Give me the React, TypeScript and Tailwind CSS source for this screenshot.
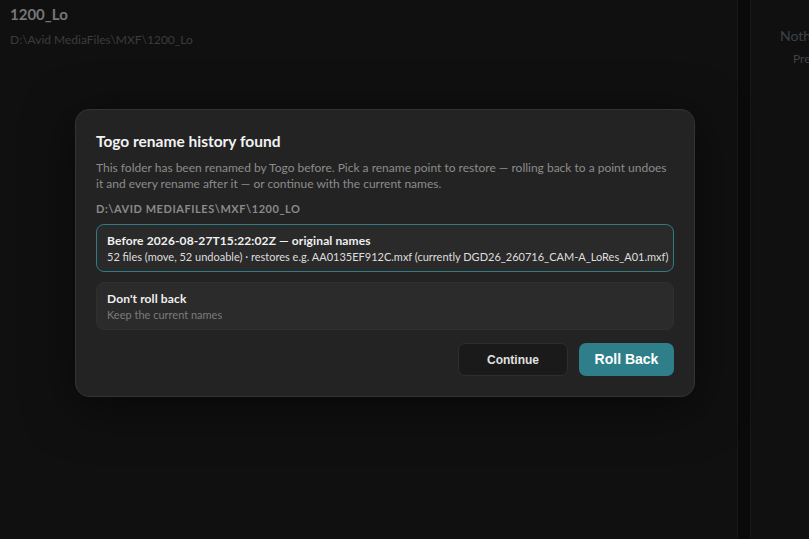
import React from 'react';

const ui = { fontFamily: 'Lato, "Noto Sans", sans-serif' };
const btn = { fontFamily: '"Liberation Sans", Arial, sans-serif' };

interface RollbackOption {
    title: string;
    detail: string;
    selected?: boolean;
}

const options: ReadonlyArray<RollbackOption> = [
    {
        title: 'Before 2026-08-27T15:22:02Z — original names',
        detail: '52 files (move, 52 undoable) · restores e.g. AA0135EF912C.mxf (currently DGD26_260716_CAM-A_LoRes_A01.mxf)',
        selected: true,
    },
    { title: "Don't roll back", detail: 'Keep the current names' },
];

const App: React.FC = () => {
    return (
        <div className="relative flex h-[539px] w-[809px] overflow-hidden bg-[#101010]" style={ui}>
            {/* background app, already dimmed */}
            <div className="flex w-[737px] flex-col px-[10px] pt-[4px]">
                <h1 className="text-[15px] font-bold leading-[20px] text-[#767676]">1200_Lo</h1>
                <p className="mt-[8px] text-[12px] leading-[16px] text-[#3c3c3c]">D:\Avid MediaFiles\MXF\1200_Lo</p>
            </div>
            <div className="w-[14px] border-x border-[#161616] bg-[#0a0a0a]" />
            <div className="flex flex-1 flex-col overflow-hidden pt-[27px] whitespace-nowrap text-[#3d4249]">
                <span className="ml-[29px] text-[14px] leading-[18px]">Nothing</span>
                <span className="ml-[42px] mt-[6px] text-[12px] leading-[16px]">Pre</span>
            </div>

            <div className="absolute inset-0 pl-[75px] pt-[109px]">
                <div className="w-[620px] rounded-[14px] border border-[#333333] bg-[#232323] px-[20px] pb-[20px] pt-[20px] shadow-[0_10px_50px_rgba(0,0,0,0.55)]">
                    <h2 className="text-[15.5px] font-bold leading-[22px] text-[#f2f2f2]">Togo rename history found</h2>
                    <p className="mt-[8px] text-[12px] leading-[16px] text-[#8c8c8c]">
                        This folder has been renamed by Togo before. Pick a rename point to restore — rolling back to a point undoes
                        it and every rename after it — or continue with the current names.
                    </p>
                    <p className="mt-[10px] text-[11px] font-bold uppercase leading-[14px] tracking-[0.05em] text-[#8a8a8a]">
                        D:\Avid MediaFiles\MXF\1200_Lo
                    </p>
                    <div className="mt-[8px] flex flex-col gap-[10px]">
                        {options.map(({ title, detail, selected }, i) => (
                            <div
                                key={i}
                                className={`flex h-[48px] flex-col justify-center rounded-[8px] border px-[10px] ${selected ? 'border-[#2f7c85] bg-[#2a2a2a]' : 'border-[#303030] bg-[#2b2b2b]'}`}
                            >
                                <span className="text-[12px] font-bold leading-[16px] tracking-[0.01em] text-[#f0f0f0]">{title}</span>
                                <span className={`text-[11px] leading-[15px] whitespace-nowrap ${selected ? 'text-[#dedede]' : 'text-[#7c7c7c]'}`}>{detail}</span>
                            </div>
                        ))}
                    </div>
                    <div className="mt-[13px] flex justify-end gap-[11px]" style={btn}>
                        <button className="h-[33px] w-[110px] rounded-[7px] border border-[#2e2e2e] bg-[#1a1a1a] text-[12px] font-bold text-[#e0e0e0]">
                            Continue
                        </button>
                        <button className="h-[33px] w-[95px] rounded-[7px] bg-[#2e7f89] text-[14px] font-bold text-white">
                            Roll Back
                        </button>
                    </div>
                </div>
            </div>
        </div>
    );
};

export default App;
